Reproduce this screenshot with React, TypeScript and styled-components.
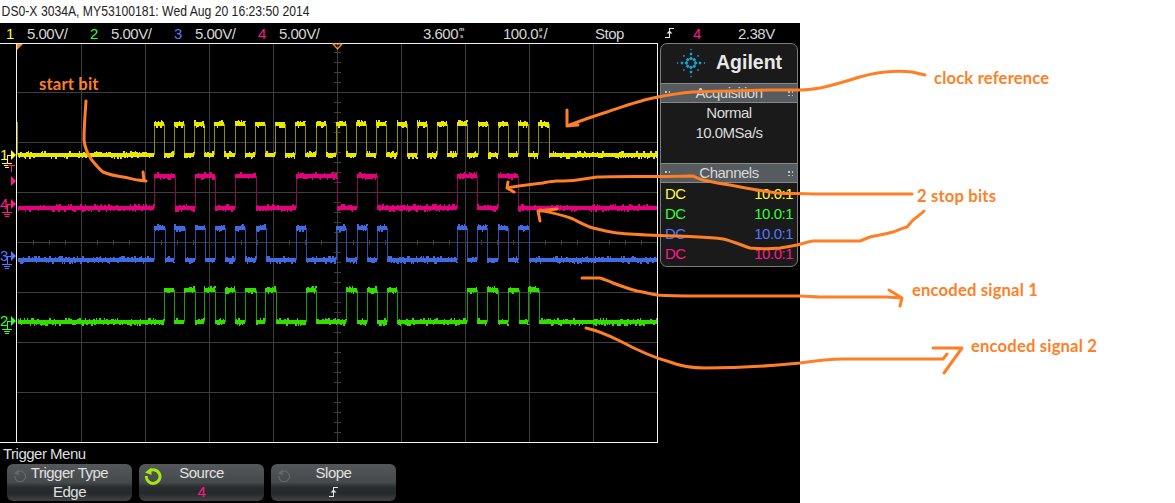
import React from "react";
import styled, { createGlobalStyle, css } from "styled-components";

const GlobalStyle = createGlobalStyle`
  html, body {
    margin: 0;
    padding: 0;
    background: #fff;
  }
`;

const YELLOW = "#ffff33";
const GREEN = "#33ff33";
const BLUE = "#5577ff";
const PINK = "#ff1a8c";
const ORANGE = "#ff7f27";

const scopeText = css`
  font-size: 15px;
  letter-spacing: -0.5px;
`;

const Page = styled.div`
  position: relative;
  width: 1175px;
  height: 503px;
  overflow: hidden;
  background: #fff;
  font-family: "Liberation Sans", Arial, sans-serif;
`;

const TitleBar = styled.div`
  height: 23px;
  padding-left: 2px;
  font-size: 15px;
  line-height: 21px;
  color: #222;
  white-space: nowrap;
  transform: scaleX(0.812);
  transform-origin: left center;
`;

const Scope = styled.div`
  width: 800px;
  height: 480px;
  background: #000;
  display: flex;
  flex-direction: column;
`;

const StatusBar = styled.div`
  ${scopeText}
  height: 20px;
  display: flex;
  align-items: center;
  padding-left: 6px;
  color: #d6d6d6;
  white-space: nowrap;
`;

const ChannelScale = styled.div`
  width: 84px;
  display: flex;
`;

const ChannelNum = styled.span<{ $color: string }>`
  width: 21px;
  color: ${(p) => p.$color};
`;

const Readouts = styled.div`
  display: flex;
  align-items: center;
  margin-left: 81px;
`;

const Readout = styled.div<{ $w: number; $color?: string }>`
  width: ${(p) => p.$w}px;
  display: flex;
  align-items: center;
  color: ${(p) => p.$color || "#d6d6d6"};
`;

const StackedUnit = styled.span`
  display: inline-flex;
  flex-direction: column;
  align-items: center;
  font-size: 6px;
  line-height: 7px;
  letter-spacing: 0;
  font-weight: bold;
  margin: 0 1px;
`;

const Main = styled.div`
  height: 400px;
  display: flex;
  align-items: flex-start;
`;

const Screen = styled.svg`
  display: block;
  flex: none;
`;

const Panel = styled.aside`
  ${scopeText}
  width: 138px;
  height: 224px;
  margin-left: 2px;
  box-sizing: border-box;
  border: 1px solid #7c7c7c;
  border-radius: 7px;
  background: #1a1a1a;
  display: flex;
  flex-direction: column;
  overflow: hidden;
  color: #dcdcdc;
`;

const LogoRow = styled.div`
  height: 39px;
  box-sizing: border-box;
  padding: 0 0 2px 15px;
  display: flex;
  align-items: center;
  gap: 10px;
`;

const Wordmark = styled.span`
  font-size: 19.5px;
  font-weight: bold;
  letter-spacing: 0;
  color: #e8e8e8;
`;

const PanelHeader = styled.div`
  height: 20px;
  box-sizing: border-box;
  background: #555b5e;
  border-top: 1px solid #85898b;
  border-bottom: 1px solid #85898b;
  display: flex;
  align-items: center;
  justify-content: space-between;
  padding: 0 4px;
  line-height: 18px;
  color: #d8d8d8;
`;

const Grip = styled.span`
  width: 5px;
  height: 5px;
  background-image: radial-gradient(circle at 1px 1px, #c4c4c4 0.9px, transparent 1px);
  background-size: 4px 4px;
`;

const AcquisitionBody = styled.div`
  height: 60px;
  display: flex;
  flex-direction: column;
  align-items: center;
  line-height: 20px;
`;

const ChannelList = styled.div`
  display: flex;
  flex-direction: column;
`;

const ChannelRow = styled.div<{ $color: string }>`
  height: 20px;
  display: flex;
  justify-content: space-between;
  align-items: center;
  padding: 0 4px;
  color: ${(p) => p.$color};
`;

const MenuTitle = styled.div`
  ${scopeText}
  height: 21px;
  padding-left: 3px;
  line-height: 21px;
  color: #dedede;
`;

const Softkeys = styled.div`
  display: flex;
  gap: 7px;
  padding-left: 7px;
`;

const Softkey = styled.div`
  ${scopeText}
  position: relative;
  width: 125px;
  height: 37px;
  box-sizing: border-box;
  border-radius: 6px;
  background: linear-gradient(
    #54585a 0%,
    #45494b 50%,
    #2a2e30 62%,
    #24282a 78%,
    #3f4345 100%
  );
  display: flex;
  flex-direction: column;
  align-items: center;
  line-height: 18.5px;
  color: #e0e0e0;
`;

const KeyValue = styled.span<{ $color?: string }>`
  display: flex;
  align-items: center;
  height: 19px;
  color: ${(p) => p.$color || "#e0e0e0"};
`;

const Knob = styled.svg<{ $left: number; $top: number }>`
  position: absolute;
  left: ${(p) => p.$left}px;
  top: ${(p) => p.$top}px;
`;

const Annotations = styled.svg`
  position: absolute;
  left: 0;
  top: 0;
  pointer-events: none;
`;

const Note = styled.span<{ $left: number; $top: number }>`
  position: absolute;
  left: ${(p) => p.$left}px;
  top: ${(p) => p.$top}px;
  font-family: Lato, "Open Sans", sans-serif;
  font-weight: bold;
  font-size: 16.6px;
  letter-spacing: 0.18px;
  line-height: 18px;
  color: ${ORANGE};
  white-space: nowrap;
`;

const noise = (i: number) => {
  const s = Math.sin(i * 12.9898) * 43758.5453;
  return s - Math.floor(s);
};

type Trace = {
  high: number;
  low: number;
  color: string;
  edge: string;
  edges: number[];
  seed: number;
};

const clockEdges: number[] = [];
for (let k = 0; k < 20; k++) {
  clockEdges.push(153.5 + 20.25 * k, 153.5 + 20.25 * k + (k === 19 ? 10.5 : 10.1));
}

const traces: Trace[] = [
  { high: 122, low: 153, color: "#e8e800", edge: "#8f8f00", edges: clockEdges, seed: 11 },
  {
    high: 174,
    low: 206,
    color: "#e6007e",
    edge: "#8c0a55",
    seed: 37,
    edges: [153.5, 174.5, 194.5, 214.5, 235, 255.5, 295.5, 336.5, 356.7, 376.7, 457.3, 477.3, 497.7, 518.3],
  },
  {
    high: 226,
    low: 258,
    color: "#4169e1",
    edge: "#2f4aa8",
    seed: 73,
    edges: [
      153.5, 164.5, 174, 184.5, 194.5, 204.5, 214.5, 225, 235, 245, 255.5, 265.5, 295.5, 305.5, 336, 346.3, 356.7,
      366.7, 376.7, 386.7, 457.3, 467.3, 477.3, 487.3, 497.7, 507.7, 518.3, 529,
    ],
  },
  {
    high: 288,
    low: 320,
    color: "#33dd00",
    edge: "#1f9a00",
    seed: 101,
    edges: [
      164.3, 174.3, 184.3, 194.7, 204.3, 214.7, 224.7, 235, 245.3, 255.7, 265.3, 275.7, 305.7, 315.7, 346.3, 356.7,
      366.7, 376.7, 386.7, 396.7, 467.3, 477.3, 487.3, 497.7, 508.3, 518.7, 528.3, 538.7,
    ],
  },
];

// bands with a bit of speckle, edges drawn separately because they're dimmer
const tracePaths = (t: Trace) => {
  let band = "";
  let edge = "";
  const points = [18, ...t.edges, 657];
  for (let i = 0; i < points.length - 1; i++) {
    const isHigh = i % 2 === 1;
    const y = isHigh ? t.high : t.low;
    const x0 = Math.round(points[i]);
    const x1 = Math.round(points[i + 1]);
    band += `M${x0} ${y}H${x1}V${y + 4}H${x0}Z`;
    for (let x = x0; x < x1; x++) {
      const n = noise(x + t.seed);
      if (n > 0.55) {
        const up = noise(x * 3 + t.seed) > 0.5;
        const len = 1 + Math.floor(noise(x * 7 + t.seed) * 1.7);
        const w = noise(x * 5 + t.seed) > 0.5 ? 2 : 1;
        band += up ? `M${x} ${y - len}h${w}v${len}h-${w}Z` : `M${x} ${y + 4}h${w}v${len}h-${w}Z`;
      }
    }
    if (i < points.length - 2) {
      edge += `M${x1 + 0.5} ${t.high + 2}V${t.low + 2}`;
    }
  }
  return { band, edge };
};

const verticals = [81, 145, 209, 273, 337, 401, 465, 529, 593];
const horizontals = [92, 142, 192, 242, 292, 342, 392];

const GridLines = () => {
  const centerTicksX: number[] = [];
  for (let x = 33; x < 657; x += 16) centerTicksX.push(x);
  const centerTicksY: number[] = [];
  for (let y = 52; y < 442; y += 10) centerTicksY.push(y);
  return (
    <g shapeRendering="crispEdges" stroke="#3e3e3e" strokeWidth={1}>
      {verticals.map((x) => (
        <line key={x} x1={x + 0.5} x2={x + 0.5} y1={44} y2={442} />
      ))}
      {horizontals.map((y) => (
        <line key={y} x1={17} x2={657} y1={y + 0.5} y2={y + 0.5} />
      ))}
      {centerTicksX.map((x) => (
        <line key={x} x1={x + 0.5} x2={x + 0.5} y1={240} y2={245} />
      ))}
      {centerTicksY.map((y) => (
        <line key={y} x1={334} x2={341} y1={y + 0.5} y2={y + 0.5} />
      ))}
    </g>
  );
};

const Ground = ({ x, y, color }: { x: number; y: number; color: string }) => (
  <path
    d={`M${x - 5} ${y + 0.5}h10M${x - 3} ${y + 2.5}h6M${x - 2} ${y + 4.5}h4`}
    stroke={color}
    strokeWidth={1}
    fill="none"
    shapeRendering="crispEdges"
  />
);

const ChannelMarker = ({ label, y, color }: { label: string; y: number; color: string }) => (
  <g>
    <text x={0} y={y + 5} fontSize={15} fontFamily="Liberation Sans" fill={color}>
      {label}
    </text>
    <path d={`M11 ${y - 5}L16 ${y}L11 ${y + 5}Z`} fill={color} />
    <path
      d={`M11.5 ${y + 0.5}H7.5V${y + 8}`}
      stroke={color}
      fill="none"
      strokeWidth={1}
      shapeRendering="crispEdges"
    />
    <Ground x={7} y={y + 8} color={color} />
  </g>
);

const ScopeScreen = () => (
  <Screen width={658} height={400} viewBox="0 43 658 400">
    <GridLines />
    <path d="M17.5 122V155" stroke="#8f8f00" strokeWidth={1} shapeRendering="crispEdges" />
    {traces.map((t) => {
      const { band, edge } = tracePaths(t);
      return (
        <g key={t.seed} shapeRendering="crispEdges">
          <path d={edge} stroke={t.edge} strokeWidth={1} fill="none" />
          <path d={band} fill={t.color} />
        </g>
      );
    })}
    <path
      d="M0 43.5H657.5V442.5H0M16.5 43V442"
      stroke="#f2f2f2"
      strokeWidth={1.2}
      fill="none"
      shapeRendering="crispEdges"
    />
    <path d="M17 44H23L17 50Z" fill="#ff8a1e" />
    <path d="M333 44H342L337.5 49Z" fill="none" stroke="#ff8a1e" strokeWidth={1.2} />
    <ChannelMarker label="1" y={155} color={YELLOW} />
    <ChannelMarker label="4" y={204} color={PINK} />
    <ChannelMarker label="3" y={256} color={BLUE} />
    <ChannelMarker label="2" y={321} color={GREEN} />
    <path d="M8 165.5H15M11.5 165V172" stroke={PINK} strokeWidth={1} shapeRendering="crispEdges" />
    <path d="M11 176L16 181L11 186Z" fill={PINK} />
  </Screen>
);

const sparkArms = [0, 45, 90, 135, 180, 225, 270, 315];

const Diamond = ({ x, y, r }: { x: number; y: number; r: number }) => (
  <path d={`M${x} ${y - r}L${x + r} ${y}L${x} ${y + r}L${x - r} ${y}Z`} />
);

const AgilentSpark = () => (
  <svg width={30} height={30} viewBox="-15 -15 30 30">
    <g fill="#1ea3cf">
      {sparkArms.map((deg) => {
        const a = (deg * Math.PI) / 180;
        const c = Math.cos(a);
        const s = Math.sin(a);
        const straight = deg % 90 === 0;
        return (
          <g key={deg}>
            <Diamond x={c * 4.6} y={s * 4.6} r={2} />
            <Diamond x={c * (straight ? 9 : 10)} y={s * (straight ? 9 : 10)} r={straight ? 1.7 : 1.1} />
            {straight && <Diamond x={c * 13.5} y={s * 13.5} r={0.9} />}
          </g>
        );
      })}
    </g>
  </svg>
);

const SlopeGlyph = ({ color = "#e8e8e8" }: { color?: string }) => (
  <svg width={9} height={12} viewBox="0 0 9 12">
    <path
      d="M0 10.5H4.5V1.5H9"
      fill="none"
      stroke={color}
      strokeWidth={1.4}
      shapeRendering="crispEdges"
    />
    <path d="M1.5 6.5H7.5L4.5 3.5Z" fill={color} />
  </svg>
);

const KnobIcon = ({ active }: { active?: boolean }) => {
  const color = active ? "#a8e60f" : "#666a6c";
  const size = active ? 18 : 14;
  return (
    <Knob $left={active ? 5 : 6} $top={active ? 3 : 5} width={size} height={size} viewBox="0 0 18 18">
      <path
        d="M5 4.2A6.8 6.8 0 1 1 2.4 9"
        fill="none"
        stroke={color}
        strokeWidth={active ? 3 : 1.4}
      />
      <path d="M7.5 0.5V8L1 5.5Z" fill={color} />
    </Knob>
  );
};

const Stroke = ({ d }: { d: string }) => (
  <path d={d} fill="none" stroke={ORANGE} strokeWidth={3} strokeLinecap="round" strokeLinejoin="round" />
);

const channels = [
  { num: "1", color: YELLOW },
  { num: "2", color: GREEN },
  { num: "3", color: BLUE },
  { num: "4", color: PINK },
];

export default function App() {
  return (
    <Page>
      <GlobalStyle />
      <TitleBar>DS0-X 3034A, MY53100181: Wed Aug 20 16:23:50 2014</TitleBar>
      <Scope>
        <StatusBar>
          {channels.map((c) => (
            <ChannelScale key={c.num}>
              <ChannelNum $color={c.color}>{c.num}</ChannelNum>
              <span>5.00V/</span>
            </ChannelScale>
          ))}
          <Readouts>
            <Readout $w={80}>
              <span>3.600</span>
              <StackedUnit>
                <span>m</span>
                <span>s</span>
              </StackedUnit>
            </Readout>
            <Readout $w={92}>
              <span>100.0</span>
              <StackedUnit>
                <span>µ</span>
                <span>s</span>
              </StackedUnit>
              <span>/</span>
            </Readout>
            <Readout $w={70}>Stop</Readout>
            <Readout $w={28}>
              <SlopeGlyph />
            </Readout>
            <Readout $w={45} $color={PINK}>
              4
            </Readout>
            <Readout $w={40}>2.38V</Readout>
          </Readouts>
        </StatusBar>
        <Main>
          <ScopeScreen />
          <Panel>
            <LogoRow>
              <AgilentSpark />
              <Wordmark>Agilent</Wordmark>
            </LogoRow>
            <PanelHeader>
              <Grip />
              <span>Acquisition</span>
              <Grip />
            </PanelHeader>
            <AcquisitionBody>
              <span>Normal</span>
              <span>10.0MSa/s</span>
            </AcquisitionBody>
            <PanelHeader>
              <Grip />
              <span>Channels</span>
              <Grip />
            </PanelHeader>
            <ChannelList>
              {channels.map((c) => (
                <ChannelRow key={c.num} $color={c.color}>
                  <span>DC</span>
                  <span>10.0:1</span>
                </ChannelRow>
              ))}
            </ChannelList>
          </Panel>
        </Main>
        <MenuTitle>Trigger Menu</MenuTitle>
        <Softkeys>
          <Softkey>
            <KnobIcon />
            <span>Trigger Type</span>
            <KeyValue>Edge</KeyValue>
          </Softkey>
          <Softkey>
            <KnobIcon active />
            <span>Source</span>
            <KeyValue $color={PINK}>4</KeyValue>
          </Softkey>
          <Softkey>
            <KnobIcon />
            <span>Slope</span>
            <KeyValue>
              <SlopeGlyph />
            </KeyValue>
          </Softkey>
        </Softkeys>
      </Scope>
      <Annotations width={1175} height={503}>
        <Stroke d="M86 101C85 115 84 128 84 140C85 148 87 153 91 159C95 164 99 169 103 172C110 175 116 176 123 177C130 178 137 181 146 181M143 172L144 181M138 180L146 181" />
        <Stroke d="M567 110L567 126L578 125M567 126C580 121 594 116 607 112C622 107 638 101 653 98C668 95 680 93 693 92C718 91 743 91 767 90C778 90 790 90 800 90C808 90 814 89 820 88C830 86 840 83 850 80C862 76 873 73 885 72C894 71 904 71 912 72L925 75" />
        <Stroke d="M508 182L507 188L514 192M507 188C519 186 531 184 543 183C548 182 552 181 557 181C564 181 570 181 577 180C584 179 590 178 597 177C620 176 645 177 693 176C696 177 699 179 703 180C712 182 721 184 730 185C746 188 761 191 777 193C790 194 800 193 813 194L912 194" />
        <Stroke d="M540 221L538 211L557 209M540 210C552 213 563 215 573 219C579 222 586 226 593 228C601 230 609 232 617 233C635 235 652 235 680 236C695 237 709 237 723 239C732 241 741 245 750 248C760 249 770 249 780 248C787 247 792 246 797 245C802 244 807 242 813 241L860 241C863 240 867 238 870 237C878 235 886 234 893 232C899 230 903 228 907 227C909 225 911 222 913 220C917 217 921 214 924 211" />
        <Stroke d="M582 278L600 278C604 279 608 281 613 283C621 286 629 289 637 291C644 292 650 294 657 295C670 296 685 296 700 296L800 296C807 296 813 297 820 297L887 297L902 298M889 290L902 298L900 306" />
        <Stroke d="M586 328C595 330 610 336 620 341C635 349 655 358 670 362C680 366 692 368 705 368C735 368 770 366 800 363C814 361 828 359 843 359L943 359L947 354M933 348H962L944 373" />
      </Annotations>
      <Note $left={39} $top={75}>start bit</Note>
      <Note $left={934} $top={69}>clock reference</Note>
      <Note $left={917} $top={187}>2 stop bits</Note>
      <Note $left={912} $top={281}>encoded signal 1</Note>
      <Note $left={971} $top={337}>encoded signal 2</Note>
    </Page>
  );
}
